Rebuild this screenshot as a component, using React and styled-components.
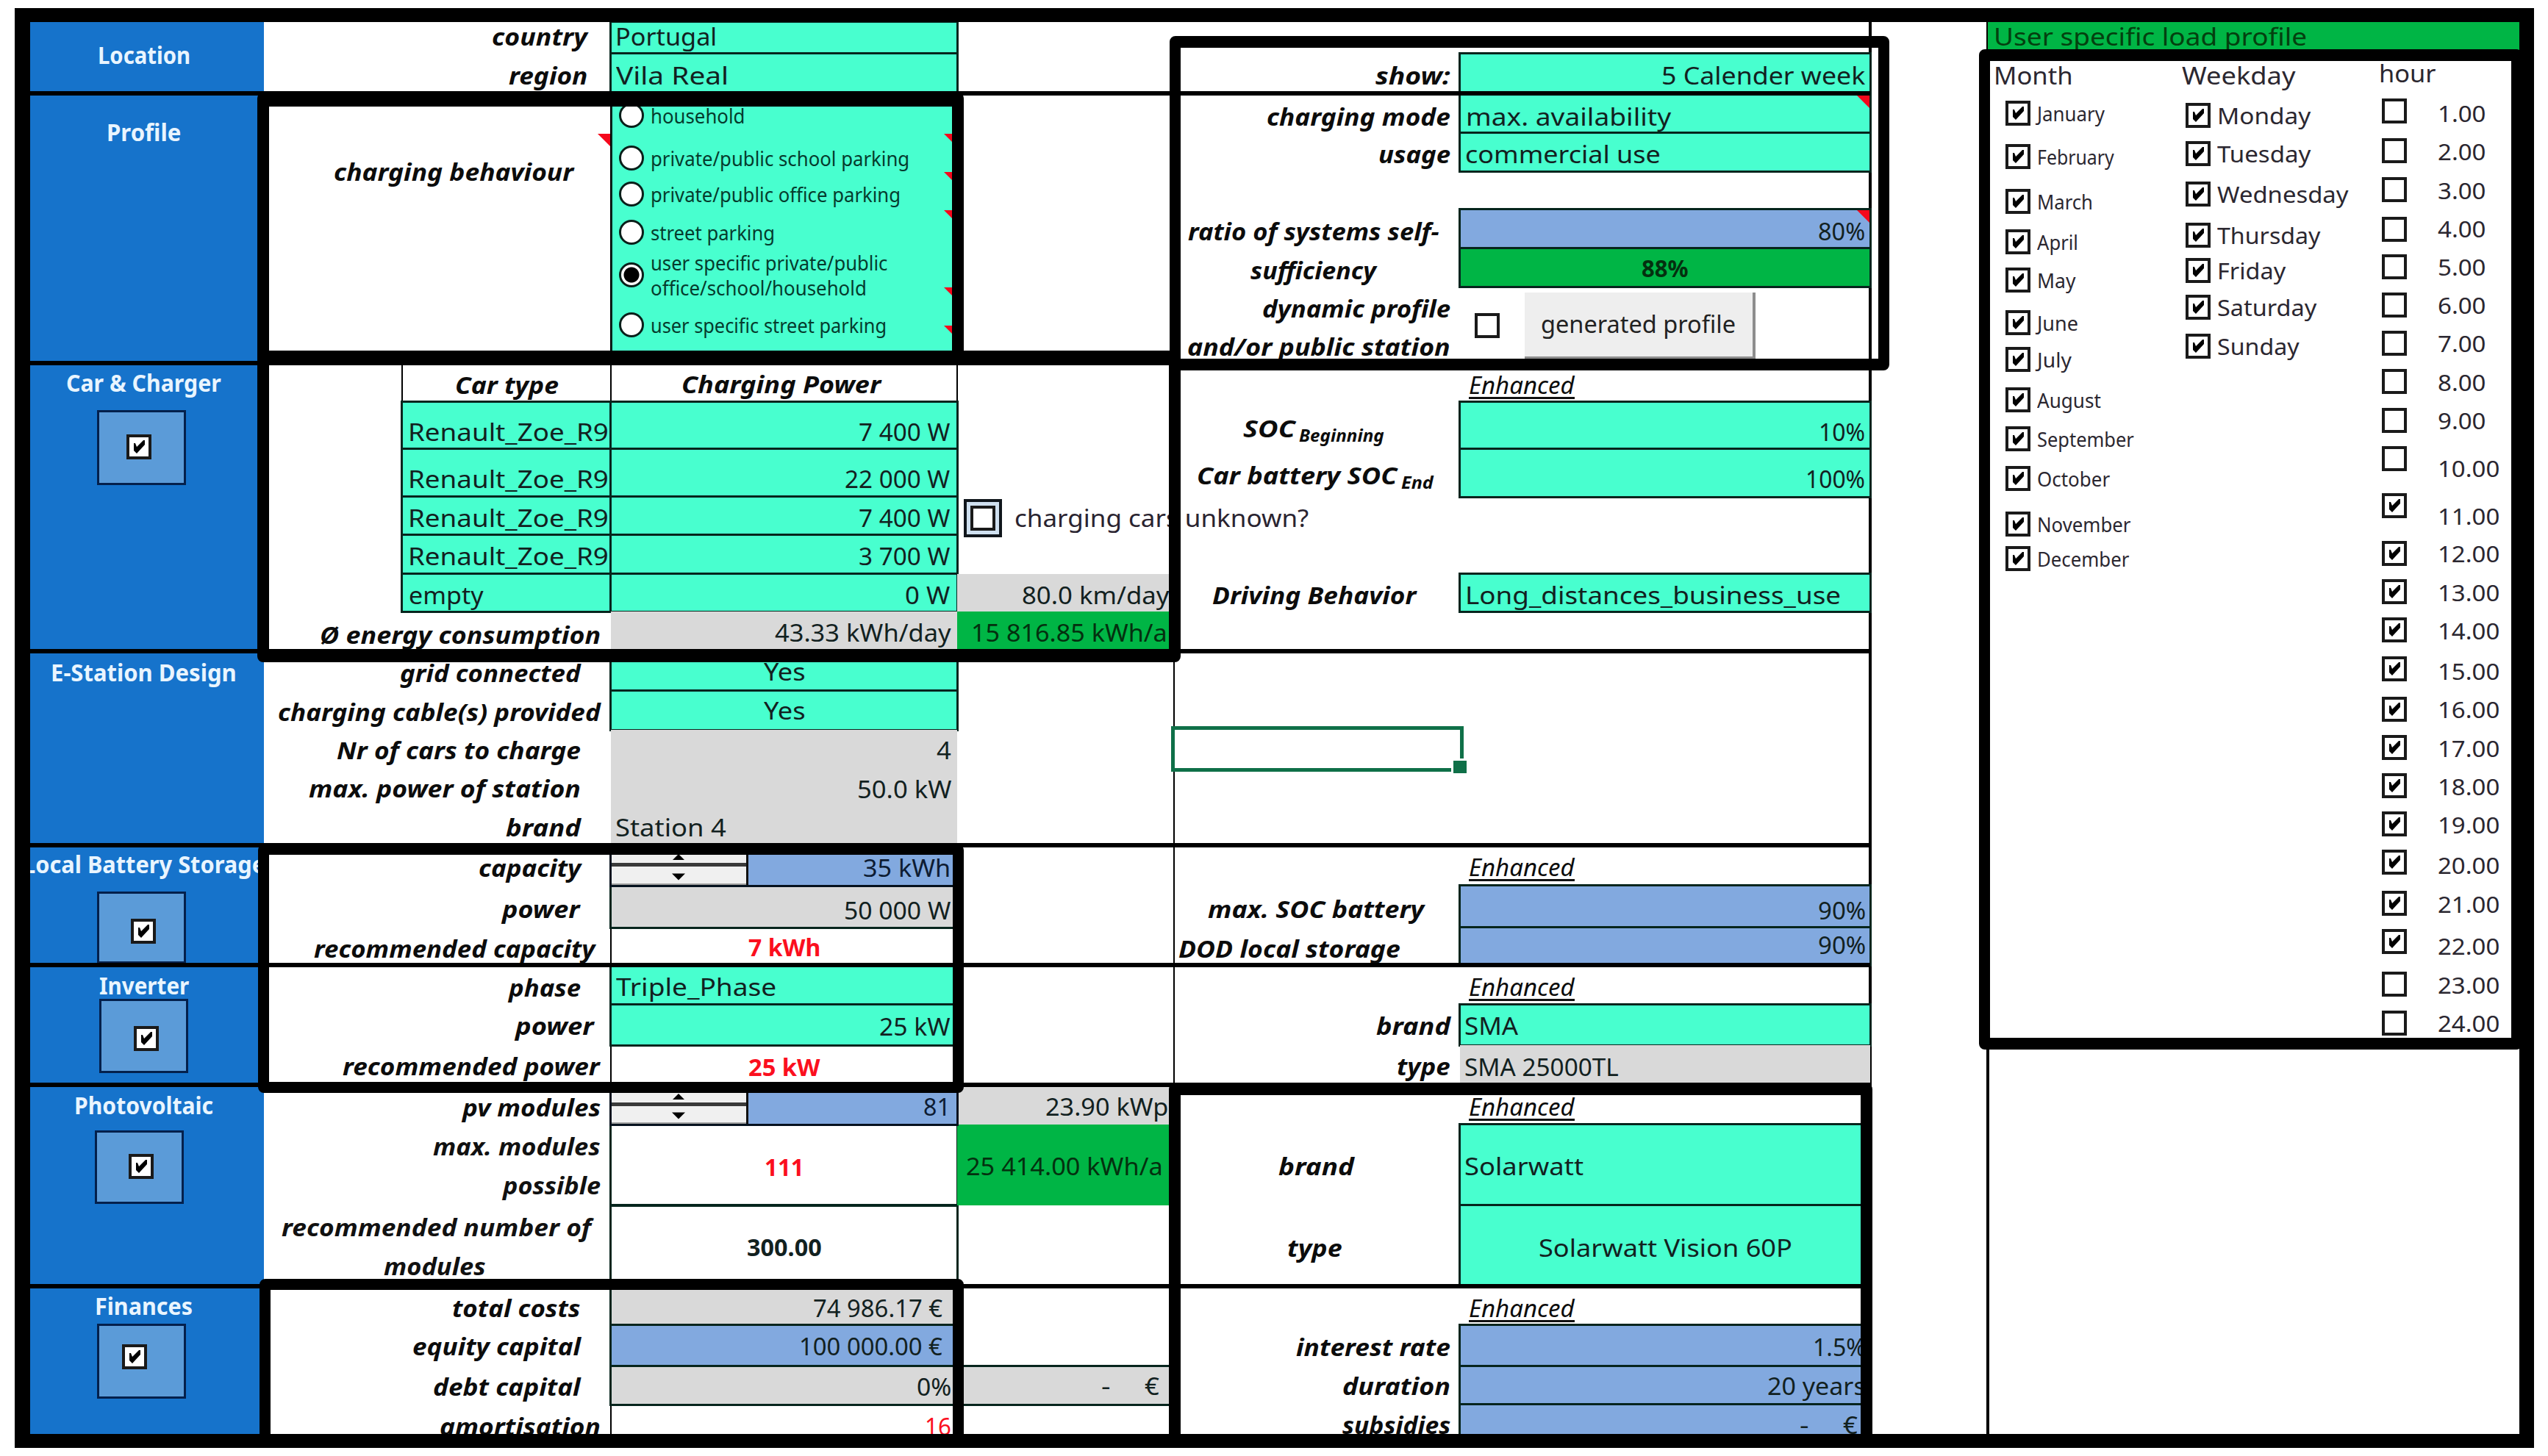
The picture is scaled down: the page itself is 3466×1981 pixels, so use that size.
import { useLayoutEffect, useRef, useState } from 'react'
import styled, { createGlobalStyle } from 'styled-components'

const FILLS = {
    mint: '#48ffcf',
    blue: '#82a9df',
    gray: '#d9d9d9',
    green: '#00b545',
    none: 'transparent'
}

const JUSTIFY = { l: 'flex-start', r: 'flex-end', c: 'center' }

// [grid area, text, text width, align, side padding, baseline above cell bottom]
const labels = [
    ['1/2/2/4', 'country', 130, 'r', 32, 11],
    ['2/2/3/4', 'region', 107, 'r', 32, 12],
    ['3/2/10/4', 'charging behaviour', 326, 'r', 51, 248],
    ['10/3/11/4', 'Car type', 141, 'r', 71, 11],
    ['16/2/17/4', 'Ø energy consumption', 382, 'r', 14, 10],
    ['17/2/18/4', 'grid connected', 246, 'r', 41, 12],
    ['18/2/19/4', 'charging cable(s) provided', 439, 'r', 14, 12],
    ['19/2/20/4', 'Nr of cars to charge', 332, 'r', 41, 13],
    ['20/2/21/4', 'max. power of station', 370, 'r', 41, 13],
    ['21/2/22/4', 'brand', 102, 'r', 41, 12],
    ['22/2/23/4', 'capacity', 139, 'r', 41, 12],
    ['23/2/24/4', 'power', 106, 'r', 42, 13],
    ['24/2/25/4', 'recommended capacity', 382, 'r', 22, 10],
    ['25/2/26/4', 'phase', 98, 'r', 41, 11],
    ['26/2/27/4', 'power', 107, 'r', 23, 14],
    ['27/2/28/4', 'recommended power', 350, 'r', 15, 13],
    ['28/2/29/4', 'pv modules', 188, 'r', 14, 11],
    ['31/2/32/4', 'total costs', 175, 'r', 41, 11],
    ['32/2/33/4', 'equity capital', 229, 'r', 41, 15],
    ['33/2/34/4', 'debt capital', 201, 'r', 41, 12],
    ['34/2/35/4', 'amortisation', 219, 'r', 14, 11],
    ['10/4/11/5', 'Charging Power', 271, 'r', 104, 12],
    ['2/6/3/7', 'show:', 102, 'r', 13, 12],
    ['3/6/4/7', 'charging mode', 250, 'r', 13, 10],
    ['4/6/5/7', 'usage', 98, 'r', 13, 11],
    ['6/6/7/7', 'ratio of systems self-', 342, 'r', 28, 11],
    ['7/6/8/7', 'sufficiency', 171, 'r', 114, 10],
    ['8/6/9/7', 'dynamic profile', 256, 'r', 13, 10],
    ['9/6/10/7', 'and/or public station', 358, 'r', 13, 10],
    ['15/6/16/7', 'Driving Behavior', 277, 'r', 60, 10],
    ['23/6/24/7', 'max. SOC battery', 294, 'r', 49, 13],
    ['24/6/25/7', 'DOD local storage', 302, 'r', 81, 10],
    ['26/6/27/7', 'brand', 101, 'r', 13, 14],
    ['27/6/28/7', 'type', 73, 'r', 13, 13],
    ['29/6/30/7', 'brand', 103, 'r', 144, 41],
    ['30/6/31/7', 'type', 75, 'r', 160, 40],
    ['32/6/33/7', 'interest rate', 210, 'r', 13, 14],
    ['33/6/34/7', 'duration', 147, 'r', 13, 13],
    ['34/6/35/7', 'subsidies', 147, 'r', 13, 13]
]

// [grid area, fill, boxed, text, text width, align, side padding, baseline, tone]
const values = [
    ['1/4/2/5', 'mint', 1, 'Portugal', 138, 'l', 6, 11],
    ['2/4/3/5', 'mint', 1, 'Vila Real', 153, 'l', 7, 12],
    ['11/3/12/4', 'mint', 1, 'Renault_Zoe_R90', 294, 'l', 8, 11],
    ['12/3/13/4', 'mint', 1, 'Renault_Zoe_R90', 294, 'l', 8, 12],
    ['13/3/14/4', 'mint', 1, 'Renault_Zoe_R90', 294, 'l', 8, 11],
    ['14/3/15/4', 'mint', 1, 'Renault_Zoe_R90', 294, 'l', 8, 12],
    ['15/3/16/4', 'mint', 1, 'empty', 102, 'l', 9, 10],
    ['11/4/12/5', 'mint', 1, '7 400 W', 124, 'r', 10, 11],
    ['12/4/13/5', 'mint', 1, '22 000 W', 143, 'r', 10, 12],
    ['13/4/14/5', 'mint', 1, '7 400 W', 124, 'r', 10, 11],
    ['14/4/15/5', 'mint', 1, '3 700 W', 124, 'r', 10, 12],
    ['15/4/16/5', 'mint', 1, '0 W', 61, 'r', 10, 10],
    ['16/4/17/5', 'gray', 0, '43.33 kWh/day', 240, 'r', 8, 13],
    ['17/4/18/5', 'mint', 1, 'Yes', 56, 'c', 0, 14],
    ['18/4/19/5', 'mint', 1, 'Yes', 56, 'c', 0, 14],
    ['19/4/20/5', 'gray', 0, '4', 20, 'r', 8, 13],
    ['20/4/21/5', 'gray', 0, '50.0 kW', 128, 'r', 8, 12],
    ['21/4/22/5', 'gray', 0, 'Station 4', 151, 'l', 6, 12],
    ['23/4/24/5', 'gray', 1, '50 000 W', 145, 'r', 9, 11],
    ['24/4/25/5', 'none', 0, '7 kWh', 98, 'c', 0, 12, 'redBold'],
    ['25/4/26/5', 'mint', 1, 'Triple_Phase', 218, 'l', 7, 12],
    ['26/4/27/5', 'mint', 1, '25 kW', 97, 'r', 9, 13],
    ['27/4/28/5', 'none', 0, '25 kW', 98, 'c', 0, 12, 'redBold'],
    ['29/4/30/5', 'none', 1, '111', 54, 'c', 0, 40, 'redBold'],
    ['30/4/31/5', 'none', 1, '300.00', 102, 'c', 0, 41, 'bold'],
    ['31/4/32/5', 'gray', 1, '74 986.17 €', 176, 'r', 20, 11],
    ['32/4/33/5', 'blue', 1, '100 000.00 €', 195, 'r', 20, 15],
    ['33/4/34/5', 'gray', 1, '0%', 47, 'r', 8, 12],
    ['34/4/35/5', 'none', 0, '16', 36, 'r', 8, 11, 'red'],
    ['15/5/16/6', 'gray', 0, '80.0 km/day', 200, 'r', 7, 10],
    ['16/5/17/6', 'green', 0, '15 816.85 kWh/a', 267, 'r', 9, 13],
    ['28/5/29/6', 'gray', 0, '23.90 kWp', 167, 'r', 8, 12],
    ['29/5/30/6', 'green', 0, '25 414.00 kWh/a', 268, 'r', 15, 41],
    ['2/7/3/8', 'mint', 1, '5 Calender week', 277, 'r', 7, 12],
    ['3/7/4/8', 'mint', 1, 'max. availability', 279, 'l', 8, 10],
    ['4/7/5/8', 'mint', 1, 'commercial use', 266, 'l', 7, 11],
    ['6/7/7/8', 'blue', 1, '80%', 64, 'r', 7, 11],
    ['7/7/8/8', 'green', 1, '88%', 64, 'c', 0, 13, 'bold'],
    ['11/7/12/8', 'mint', 1, '10%', 63, 'r', 7, 11],
    ['12/7/13/8', 'mint', 1, '100%', 81, 'r', 7, 12],
    ['15/7/16/8', 'mint', 1, 'Long_distances_business_use', 511, 'l', 7, 10],
    ['23/7/24/8', 'blue', 1, '90%', 65, 'r', 6, 11],
    ['24/7/25/8', 'blue', 1, '90%', 65, 'r', 6, 15],
    ['26/7/27/8', 'mint', 1, 'SMA', 73, 'l', 6, 14],
    ['27/7/28/8', 'gray', 0, 'SMA 25000TL', 210, 'l', 6, 12],
    ['29/7/30/8', 'mint', 1, 'Solarwatt', 162, 'l', 6, 41],
    ['30/7/31/8', 'mint', 1, 'Solarwatt Vision 60P', 345, 'c', 0, 40],
    ['32/7/33/8', 'blue', 1, '1.5%', 72, 'r', 6, 14],
    ['33/7/34/8', 'blue', 1, '20 years', 134, 'r', 6, 13]
]

const enhancedRows = [
    ['10/7/11/8', 11],
    ['22/7/23/8', 13],
    ['25/7/26/8', 12],
    ['28/7/29/8', 12],
    ['31/7/32/8', 11]
]

const sections = [
    { area: '1/1/3/2', title: 'Location', w: 126, top: 28 },
    { area: '3/1/10/2', title: 'Profile', w: 101, top: 36 },
    { area: '10/1/17/2', title: 'Car & Charger', w: 211, top: 10, panel: [91, 21, 102, 40, 34] },
    { area: '17/1/22/2', title: 'E-Station Design', w: 253, top: 12 },
    { area: '22/1/25/2', title: 'Local Battery Storage', w: 330, top: 9, panel: [91, 21, 98, 46, 38] },
    { area: '25/1/28/2', title: 'Inverter', w: 122, top: 11, panel: [94, 2, 101, 47, 38] },
    { area: '28/1/31/2', title: 'Photovoltaic', w: 189, top: 11, panel: [88, 18, 100, 46, 33] },
    { area: '31/1/35/2', title: 'Finances', w: 133, top: 10, panel: [91, 8, 102, 34, 29] }
]

const modes = [
    { text: ['household'], widths: [128], y: 157 },
    { text: ['private/public school parking'], widths: [352], y: 215 },
    { text: ['private/public office parking'], widths: [340], y: 264 },
    { text: ['street parking'], widths: [169], y: 316 },
    { text: ['user specific private/public', 'office/school/household'], widths: [322, 294], y: 374, on: true },
    { text: ['user specific street parking'], widths: [321], y: 442 }
]

const months = [
    ['January', 92, 137], ['February', 105, 196], ['March', 76, 257], ['April', 56, 312],
    ['May', 52, 364], ['June', 56, 422], ['July', 47, 472], ['August', 87, 527],
    ['September', 132, 580], ['October', 99, 634], ['November', 128, 696], ['December', 125, 743]
]

const weekdays = [
    ['Monday', 127, 140], ['Tuesday', 127, 192], ['Wednesday', 179, 247], ['Thursday', 140, 303],
    ['Friday', 93, 351], ['Saturday', 135, 401], ['Sunday', 112, 454]
]

const hourBoxes = [134, 188, 241, 295, 346, 398, 450, 502, 555, 607, 671, 736, 788, 840, 893, 948, 1000, 1052, 1104, 1156, 1212, 1264, 1322, 1375]
const hourTexts = [139, 191, 244, 296, 348, 400, 452, 505, 557, 622, 687, 738, 791, 843, 898, 950, 1003, 1055, 1107, 1162, 1215, 1272, 1325, 1377]

// [left, top, right, bottom, top width, side width, bottom width]
const frames = [
    [350, 126, 1311, 496, 19, 16, 19],
    [1591, 49, 2570, 504, 16, 15, 16],
    [350, 477, 1606, 901, 19, 16, 16],
    [351, 1149, 1311, 1487, 14, 15, 15],
    [353, 1740, 1311, 1980, 15, 15, 19],
    [1590, 1474, 2547, 1980, 16, 16, 19],
    [2692, 67, 3431, 1428, 16, 15, 16]
]

// turns absolute tops into the margin above each item of a column
const gaps = (tops, size, start) => tops.map((t, i) => t - (i ? tops[i - 1] + size : start))

function Fit({ w, children }) {
    const ref = useRef(null)
    const [scale, setScale] = useState(1)

    useLayoutEffect(() => {
        setScale(w / ref.current.offsetWidth)
    }, [w, children])

    return (
        <FitBox $w={w}>
            <FitText ref={ref} style={{ transform: `scaleX(${scale})` }}>{children}</FitText>
        </FitBox>
    )
}

function Checkbox({ checked }) {
    return (
        <Box>
            {checked && (
                <svg width='26' height='26' viewBox='0 0 26 26'>
                    <path d='M6 8 L8 8 L10 13 L19 4 L21 4 V10 L10 22 L6 18 Z' />
                </svg>
            )}
        </Box>
    )
}

function Spinner() {
    return (
        <Spin>
            <SpinButton $up>
                <svg width='16' height='8' viewBox='0 0 18 9'><path d='M9 0 L18 9 H0 Z' /></svg>
            </SpinButton>
            <SpinButton>
                <svg width='18' height='10' viewBox='0 0 18 9'><path d='M0 0 H18 L9 9 Z' /></svg>
            </SpinButton>
        </Spin>
    )
}

function LoadProfile() {
    const monthGaps = gaps(months.map(m => m[2]), 34, 119)
    const dayGaps = gaps(weekdays.map(d => d[2]), 34, 119)
    const boxGaps = gaps(hourBoxes, 34, 116)
    const textGaps = gaps(hourTexts, 31, 116)

    return (
        <Profile>
            <ProfileTitle><Fit w={426}>User specific load profile</Fit></ProfileTitle>
            <ProfileBody>
                <ProfileColumn $w={256} $top={13}>
                    <Fit w={108}>Month</Fit>
                    {months.map(([name, w], i) => (
                        <CheckRow key={name} $gap={monthGaps[i]} $indent={16} $size={27}>
                            <Checkbox checked />
                            <Fit w={w}>{name}</Fit>
                        </CheckRow>
                    ))}
                </ProfileColumn>
                <ProfileColumn $w={268} $top={13}>
                    <Fit w={155}>Weekday</Fit>
                    {weekdays.map(([name, w], i) => (
                        <CheckRow key={name} $gap={dayGaps[i]} $indent={5} $size={31}>
                            <Checkbox checked />
                            <Fit w={w}>{name}</Fit>
                        </CheckRow>
                    ))}
                </ProfileColumn>
                <ProfileColumn $w={199} $top={10}>
                    <Fit w={77}>hour</Fit>
                    <Hours>
                        <div>
                            {hourBoxes.map((y, i) => (
                                <CheckRow key={y} $gap={boxGaps[i]} $indent={4} $size={31}>
                                    <Checkbox checked={i > 9 && i < 22} />
                                </CheckRow>
                            ))}
                        </div>
                        <div>
                            {hourTexts.map((y, i) => (
                                <HourText key={y} $gap={textGaps[i]}>
                                    <Fit w={i < 9 ? 66 : 84}>{`${i + 1}.00`}</Fit>
                                </HourText>
                            ))}
                        </div>
                    </Hours>
                </ProfileColumn>
            </ProfileBody>
        </Profile>
    )
}

export default function App() {
    const modeGaps = gaps(modes.map(m => m.y - 17), 34, 127)

    return (
        <>
            <GlobalStyle />
            <Page>
                <Sheet>
                    {['1/16', '17/19', '22/35'].map(rows => (
                        <ColumnLine key={rows} $col='3/4' $rows={rows} />
                    ))}
                    {['1/16', '17/19', '22/35'].map(rows => (
                        <ColumnLine key={rows} $col='4/5' $rows={rows} />
                    ))}
                    <ColumnLine $col='5/6' $rows='17/28' />
                    <ColumnLine $col='7/8' $rows='1/35' $thick />
                    <ColumnLine $col='8/9' $rows='1/35' $thick />
                    <ColumnLine $col='2/3' $rows='10/16' />

                    {sections.map(s => (
                        <Section key={s.title} $area={s.area} $top={s.top}>
                            <Fit w={s.w}>{s.title}</Fit>
                            {s.panel && (
                                <Panel $x={s.panel[0]} $y={s.panel[1]} $h={s.panel[2]} $px={s.panel[3]} $py={s.panel[4]}>
                                    <Checkbox checked />
                                </Panel>
                            )}
                        </Section>
                    ))}

                    {values.map(([area, fill, boxed, text, w, align, pad, base, tone]) => (
                        <Cell key={area} $area={area} $fill={fill} $boxed={boxed} $align={align} $pad={pad} $base={base} $tone={tone}>
                            <Fit w={w}>{text}</Fit>
                        </Cell>
                    ))}

                    {labels.map(([area, text, w, align, pad, base]) => (
                        <Label key={area} $area={area} $align={align} $pad={pad} $base={base}>
                            <Fit w={w}>{text}</Fit>
                        </Label>
                    ))}

                    {enhancedRows.map(([area, base]) => (
                        <Enhanced key={area} $area={area} $align='l' $pad={12} $base={base}>
                            <Fit w={144}>Enhanced</Fit>
                        </Enhanced>
                    ))}

                    <Modes $area='3/4/10/5'>
                        {modes.map((m, i) => (
                            <Mode key={m.y} $gap={modeGaps[i]}>
                                <Radio $on={m.on} />
                                <div>
                                    {m.text.map((t, j) => <Fit key={t} w={m.widths[j]}>{t}</Fit>)}
                                </div>
                            </Mode>
                        ))}
                    </Modes>
                    {[4, 5, 6, 8, 9].map(r => <Note key={r} $area={`${r}/4/${r + 1}/5`} $shift={1} />)}
                    <Note $area='4/3/5/4' />
                    <Note $area='3/7/4/8' $top={3} />
                    <Note $area='6/7/7/8' />

                    <Label $area='11/6/12/7' $align='r' $pad={103} $base={16} $gap={5}>
                        <Fit w={71}>SOC</Fit>
                        <Sub><Fit w={116}>Beginning</Fit></Sub>
                    </Label>
                    <Label $area='12/6/13/7' $align='r' $pad={36} $base={17} $gap={6}>
                        <Fit w={272}>Car battery SOC</Fit>
                        <Sub><Fit w={44}>End</Fit></Sub>
                    </Label>

                    <Lines $area='29/2/30/4'>
                        <Line $right={14}><Fit w={228}>max. modules</Fit></Line>
                        <Line $right={14}><Fit w={133}>possible</Fit></Line>
                    </Lines>
                    <Lines $area='30/2/31/4'>
                        <Line $right={27}><Fit w={421}>recommended number of</Fit></Line>
                        <Line $right={170}><Fit w={139}>modules</Fit></Line>
                    </Lines>

                    <SpinCell $area='22/4/23/5'>
                        <Spinner />
                        <SpinValue><Fit w={119}>35 kWh</Fit></SpinValue>
                    </SpinCell>
                    <SpinCell $area='28/4/29/5'>
                        <Spinner />
                        <SpinValue><Fit w={37}>81</Fit></SpinValue>
                    </SpinCell>

                    <Unknown $area='13/5/14/7'>
                        <UnknownBox><Checkbox /></UnknownBox>
                        <Fit w={400}>charging cars unknown?</Fit>
                    </Unknown>

                    <Cell $area='33/5/34/6' $fill='gray' $boxed $align='r' $pad={20} $base={13} $gap={46}>
                        <Fit w={13}>-</Fit>
                        <Fit w={20}>€</Fit>
                    </Cell>
                    <Cell $area='34/7/35/8' $fill='blue' $boxed $align='r' $pad={17} $base={13} $gap={46}>
                        <Fit w={13}>-</Fit>
                        <Fit w={20}>€</Fit>
                    </Cell>

                    <Dynamic $area='8/7/10/8'>
                        <Checkbox />
                        <Generated><Fit w={265}>generated profile</Fit></Generated>
                    </Dynamic>

                    <Selection $area='19/6/20/7' />

                    {[2, 9, 16, 21, 24, 27, 30].map(r => <SectionLine key={r} $row={r} />)}

                    <LoadProfile />

                    {frames.map(f => (
                        <Frame key={f.join()} $x={f[0] - 41} $y={f[1] - 30} $w={f[2] - f[0]} $h={f[3] - f[1]} $bt={f[4]} $bs={f[5]} $bb={f[6]} />
                    ))}
                </Sheet>
            </Page>
        </>
    )
}

const GlobalStyle = createGlobalStyle`
    body {
        margin: 0;
        background: #fff;
    }
    * {
        box-sizing: border-box;
    }
`

const Page = styled.div`
    width: 3466px;
    height: 1981px;
    padding: 11px 19px 11px 20px;
    overflow: hidden;
    font-family: 'Noto Sans', 'Open Sans', sans-serif;
    font-size: 33px;
    line-height: 1;
    color: #111;
`

const Sheet = styled.div`
    position: relative;
    display: grid;
    width: 3427px;
    height: 1959px;
    overflow: hidden;
    border: solid #000;
    border-width: 19px 20px 19px 21px;
    grid-template-columns: 318px 188px 284px 471px 295px 389px 558px 160px 723px;
    grid-template-rows:
        43px 54px 54px 52px 52px 53px 52px 52px 52px 53px 64px 65px
        52px 53px 51px 54px 54px 53px 53px 52px 52px 55px 57px 51px
        54px 55px 54px 54px 110px 110px 53px 56px 52px 53px;
`

const FitBox = styled.span`
    display: block;
    flex: none;
    width: ${p => p.$w}px;
`

const FitText = styled.span`
    display: inline-block;
    vertical-align: top;
    white-space: pre;
    transform-origin: left;
`

const ColumnLine = styled.div`
    grid-column: ${p => p.$col};
    grid-row: ${p => p.$rows};
    border-right: ${p => p.$thick ? 4 : 2}px solid #000;
    margin-right: ${p => p.$thick ? -2 : -1}px;
`

const SectionLine = styled.div`
    grid-column: 1/8;
    grid-row: ${p => p.$row};
    align-self: end;
    height: 6px;
    margin-bottom: -3px;
    background: #000;
    z-index: 1;
`

const Section = styled.div`
    grid-area: ${p => p.$area};
    display: flex;
    flex-direction: column;
    align-items: center;
    padding: ${p => p.$top}px 9px 0 0;
    overflow: hidden;
    background: #1673cb;
    color: #e9f5ff;
    font-weight: 700;
`

const Panel = styled.div`
    align-self: flex-start;
    width: 121px;
    height: ${p => p.$h}px;
    margin: ${p => p.$y}px 0 0 ${p => p.$x}px;
    padding: ${p => p.$py - 4}px 0 0 ${p => p.$px - 3}px;
    border: 3px solid #04204c;
    background: #5b9bd8;
`

const Box = styled.span`
    display: block;
    flex: none;
    width: 34px;
    height: 34px;
    border: 4px solid #1a1a1a;
    background: #fff;

    svg {
        display: block;
    }
`

const Cell = styled.div`
    grid-area: ${p => p.$area};
    display: flex;
    align-items: flex-end;
    justify-content: ${p => JUSTIFY[p.$align]};
    gap: ${p => p.$gap || 0}px;
    padding: 0 ${p => p.$pad}px ${p => p.$base - 4}px;
    overflow: hidden;
    background: ${p => FILLS[p.$fill || 'none']};
    outline: ${p => p.$boxed ? '3px solid #06251d' : 'none'};
    outline-offset: -1px;
    color: ${p => p.$tone && p.$tone.startsWith('red') ? '#fb0f1e' : p.$fill === 'green' ? '#04300f' : '#12211f'};
    font-weight: ${p => p.$tone && p.$tone.toLowerCase().endsWith('bold') ? 700 : 400};
`

const Label = styled(Cell)`
    overflow: visible;
    color: #0c0c0c;
    font-weight: 700;
    font-style: italic;
`

const Enhanced = styled(Cell)`
    color: #0c0c0c;
    font-style: italic;
    overflow: visible;

    ${FitText} {
        border-bottom: 3px solid #111;
        margin-bottom: -3px;
    }
`

const Sub = styled.span`
    font-size: 24px;
    margin-bottom: -5px;
`

const Lines = styled.div`
    grid-area: ${p => p.$area};
    display: flex;
    flex-direction: column;
    align-items: flex-end;
    justify-content: flex-end;
    gap: 20px;
    padding-bottom: 11px;
    font-weight: 700;
    font-style: italic;
`

const Line = styled.div`
    margin-right: ${p => p.$right}px;
`

const Modes = styled.div`
    grid-area: ${p => p.$area};
    padding-left: 9px;
    background: #48ffcf;
    border-left: 2px solid #06251d;
    font-size: 27px;
    color: #053b2d;
`

const Mode = styled.div`
    display: flex;
    align-items: center;
    gap: 9px;
    height: 34px;
    margin-top: ${p => p.$gap}px;

    ${FitBox} + ${FitBox} {
        margin-top: 7px;
    }
`

const Radio = styled.span`
    flex: none;
    width: 34px;
    height: 34px;
    border: 3px solid #0a1f1a;
    border-radius: 50%;
    background: ${p => p.$on ? 'radial-gradient(circle, #000 0 10px, #fff 11px)' : '#fff'};
`

const Note = styled.i`
    grid-area: ${p => p.$area};
    justify-self: end;
    width: 17px;
    height: 17px;
    margin: ${p => p.$top || 1}px ${p => p.$shift || 1}px 0 0;
    background: #f5081c;
    clip-path: polygon(0 0, 100% 0, 100% 100%);
`

const SpinCell = styled.div`
    grid-area: ${p => p.$area};
    display: flex;
    outline: 3px solid #06121f;
    outline-offset: -1px;
`

const Spin = styled.div`
    display: flex;
    flex-direction: column;
    width: 187px;
    border-right: 3px solid #111;
`

const SpinButton = styled.div`
    display: flex;
    flex: ${p => p.$up ? 'none' : 1};
    height: ${p => p.$up ? '29px' : 'auto'};
    align-items: ${p => p.$up ? 'flex-end' : 'center'};
    justify-content: center;
    padding: ${p => p.$up ? '0 0 4px' : '4px 0 0'};
    background: #f0f0f0;
    border-bottom: ${p => p.$up ? '5px solid #3a3a3a' : '3px solid #a0a0a0'};
`

const SpinValue = styled.div`
    display: flex;
    flex: 1;
    align-items: flex-end;
    justify-content: flex-end;
    padding: 0 9px 8px 0;
    background: #82a9df;
    color: #0d1c33;
`

const Unknown = styled.div`
    grid-area: ${p => p.$area};
    display: flex;
    align-items: center;
    gap: 17px;
    padding: 5px 0 0 9px;
    color: #2a2430;
`

const UnknownBox = styled.div`
    padding: 5px;
    border: 4px solid #10161c;
    background: #cfe0f0;
`

const Dynamic = styled.div`
    grid-area: ${p => p.$area};
    display: flex;
    align-items: center;
    gap: 34px;
    padding: 2px 0 0 20px;
`

const Generated = styled.button`
    display: flex;
    align-items: center;
    width: 314px;
    height: 91px;
    padding: 0 0 2px 22px;
    border: 0 solid #8d8d8d;
    border-width: 0 4px 4px 0;
    background: #eee;
    color: #222;
    font: inherit;
    line-height: 1;
`

const Selection = styled.div`
    grid-area: ${p => p.$area};
    position: relative;
    margin: -5px -5px -4px -4px;
    border: 5px solid #0f7048;

    &::after {
        content: '';
        position: absolute;
        right: -9px;
        bottom: -7px;
        width: 18px;
        height: 17px;
        border: solid #fff;
        border-width: 3px 0 0 3px;
        background: #0f7048;
    }
`

const Profile = styled.div`
    grid-area: 1/9/35/10;
    display: flex;
    flex-direction: column;
    color: #2b2730;
`

const ProfileTitle = styled.div`
    height: 43px;
    padding: 3px 0 0 8px;
    background: #00b545;
    color: #04400f;
`

const ProfileBody = styled.div`
    display: flex;
`

const ProfileColumn = styled.div`
    width: ${p => p.$w}px;
    padding: ${p => p.$top}px 0 0 8px;
`

const CheckRow = styled.div`
    display: flex;
    align-items: center;
    gap: 9px;
    height: 34px;
    margin: ${p => p.$gap}px 0 0 ${p => p.$indent}px;
    font-size: ${p => p.$size}px;
`

const Hours = styled.div`
    display: flex;
    gap: 42px;
`

const HourText = styled.div`
    height: 31px;
    margin-top: ${p => p.$gap}px;
    font-size: 31px;
`

// heavy marker frames drawn over the sheet
const Frame = styled.div`
    position: absolute;
    left: ${p => p.$x}px;
    top: ${p => p.$y}px;
    width: ${p => p.$w}px;
    height: ${p => p.$h}px;
    border: solid #000;
    border-width: ${p => p.$bt}px ${p => p.$bs}px ${p => p.$bb}px;
    border-radius: 8px;
    z-index: 2;
`
